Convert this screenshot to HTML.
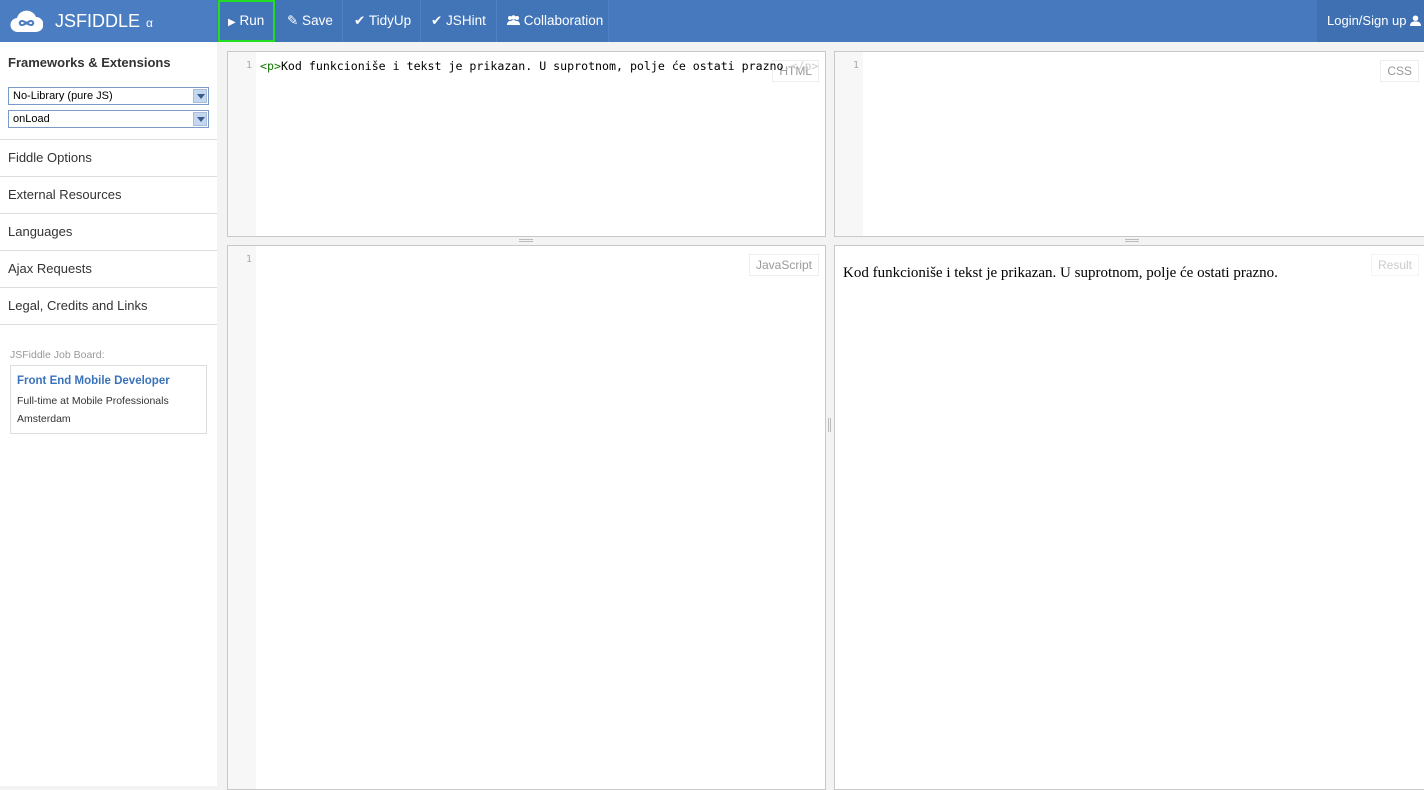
<!DOCTYPE html>
<html><head><meta charset="utf-8"><style>
*{box-sizing:border-box;margin:0;padding:0}
body{width:1424px;height:786px;overflow:hidden;background:#f3f3f3;font-family:"Liberation Sans",Arial,sans-serif;position:relative}
#hdr{position:absolute;left:0;top:0;width:1424px;height:42px;background:#4679bd}
.logo{position:absolute;left:0;top:0;width:217px;height:42px;background:#4a7dc1;color:#fff}
.logo .t{position:absolute;left:55px;top:11px;font-size:18px}
.logo .a{font-size:12px;margin-left:6px}
.btn{position:absolute;top:0;height:42px;color:#fff;font-size:13.5px;line-height:42px;border-right:1px solid #4f82c4;background:#4274b8;white-space:nowrap}
.run{outline:2px solid #22dd22;outline-offset:-2px}
#login{position:absolute;right:0;top:0;width:107px;height:42px;background:#3f70b2;color:#fff;font-size:13.5px;line-height:42px;padding-left:10px;white-space:nowrap}
#side{position:absolute;left:0;top:42px;width:217px;height:744px;background:#fff}
.h{font-weight:bold;font-size:13px;color:#333;position:absolute;left:8px;top:13px}
.sel{position:absolute;left:8px;width:201px;height:18px;border:1px solid #7a9bc5;font-size:11px;padding-left:4px;line-height:16px;color:#000;background:#fff}
.sel i{position:absolute;right:1px;top:1px;width:14px;height:14px;background:#c5d6ef;border:1px solid #a8bedf}
.sel i:after{content:"";position:absolute;left:3px;top:4px;border-left:4px solid transparent;border-right:4px solid transparent;border-top:5px solid #3a5a8e}
.item{position:absolute;left:0;width:217px;height:37px;border-top:1px solid #ddd;font-size:13px;color:#333;padding-left:8px;line-height:36px}
.jb{position:absolute;left:10px;top:307px;font-size:10.5px;color:#999}
.card{position:absolute;left:10px;top:323px;width:197px;height:69px;border:1px solid #ddd;padding:6px 6px;font-size:10.5px;color:#333;line-height:18px}
.card b{color:#3a73bb;font-size:11.5px;display:block;margin-bottom:2px}
.p{position:absolute;background:#fff;border:1px solid #c8c8c8}
.g{position:absolute;left:0;top:0;bottom:0;width:28px;background:#f7f7f7;color:#aaa;font-size:10px;text-align:right;padding:8px 4px 0 0;font-family:"DejaVu Sans Mono",monospace}
.lbl{position:absolute;right:6px;top:8px;border:1px solid #eee;font-size:12px;color:#999;padding:3px 6px}
.code{position:absolute;left:32px;top:7px;font-family:"DejaVu Sans Mono",monospace;font-size:11.6px;color:#000;white-space:nowrap;z-index:2}
.grip{position:absolute;width:14px;height:3px;border-top:1px solid #bbb;border-bottom:1px solid #bbb}
</style></head><body>
<div id="hdr">
<div class="logo">
<svg style="position:absolute;left:10px;top:8px" width="33" height="26" viewBox="0 0 33 26"><path d="M8 24a7 7 0 0 1-1-14A10 10 0 0 1 26 9a7.5 7.5 0 0 1 0 15z" fill="#fff"/><path d="M12 17c-3 0-3-4 0-4s6 4 9 4 3-4 0-4-6 4-9 4z" fill="none" stroke="#4a7dc1" stroke-width="2"/></svg>
<span class="t">JSFIDDLE<span class="a">α</span></span></div>
<div class="btn run" style="left:218px;width:57px;padding-left:10px"><span style="font-size:10px">▶</span> Run</div>
<div class="btn" style="left:275px;width:68px;padding-left:12px">✎ Save</div>
<div class="btn" style="left:343px;width:78px;padding-left:11px">✔ TidyUp</div>
<div class="btn" style="left:421px;width:76px;padding-left:10px">✔ JSHint</div>
<div class="btn" style="left:497px;width:112px;padding-left:10px"><svg width="13" height="10" viewBox="0 0 13 10" style="vertical-align:0"><circle cx="3" cy="3" r="2" fill="#fff"/><circle cx="10" cy="3" r="2" fill="#fff"/><circle cx="6.5" cy="2.5" r="2.2" fill="#fff"/><path d="M0 10c0-3 2-4 3-4s3 1 3 4zM7 10c0-3 2-4 3-4s3 1 3 4zM3 10c0-4 2-5 3.5-5S10 6 10 10z" fill="#fff"/></svg> Collaboration</div>
<div id="login" style="font-size:13px">Login/Sign up <svg width="11" height="11" viewBox="0 0 12 12" style="vertical-align:-1px"><circle cx="6" cy="3.5" r="3" fill="#fff"/><path d="M0 12c0-4 3-5 6-5s6 1 6 5z" fill="#fff"/></svg></div>
</div>
<div id="side">
<div class="h">Frameworks &amp; Extensions</div>
<div class="sel" style="top:45px">No-Library (pure JS)<i></i></div>
<div class="sel" style="top:68px">onLoad<i></i></div>
<div class="item" style="top:97px">Fiddle Options</div>
<div class="item" style="top:134px">External Resources</div>
<div class="item" style="top:171px">Languages</div>
<div class="item" style="top:208px">Ajax Requests</div>
<div class="item" style="top:245px">Legal, Credits and Links</div>
<div class="item" style="top:282px;height:1px"></div>
<div class="jb">JSFiddle Job Board:</div>
<div class="card"><b>Front End Mobile Developer</b>Full-time at Mobile Professionals<br>Amsterdam</div>
</div>
<div class="p" style="left:227px;top:51px;width:599px;height:186px"><div class="g">1</div><div class="code"><span style="color:#170">&lt;p&gt;</span>Kod funkcioniše i tekst je prikazan. U suprotnom, polje će ostati prazno<span style="color:#ccc">.&lt;/p&gt;</span></div><div class="lbl">HTML</div></div>
<div class="p" style="left:834px;top:51px;width:592px;height:186px"><div class="g">1</div><div class="lbl">CSS</div></div>
<div class="p" style="left:227px;top:245px;width:599px;height:545px"><div class="g">1</div><div class="lbl">JavaScript</div></div>
<div class="p" style="left:834px;top:245px;width:592px;height:545px"><div style="position:absolute;left:8px;top:19px;font-family:'Liberation Serif',serif;font-size:15px;color:#000">Kod funkcioniše i tekst je prikazan. U suprotnom, polje će ostati prazno.</div><div class="lbl" style="color:#ccc;border-color:#f4f4f4">Result</div></div>
<div class="grip" style="left:519px;top:239px"></div>
<div class="grip" style="left:1125px;top:239px"></div>
<div style="position:absolute;left:828px;top:418px;width:3px;height:14px;border-left:1px solid #bbb;border-right:1px solid #bbb"></div>
</body></html>
